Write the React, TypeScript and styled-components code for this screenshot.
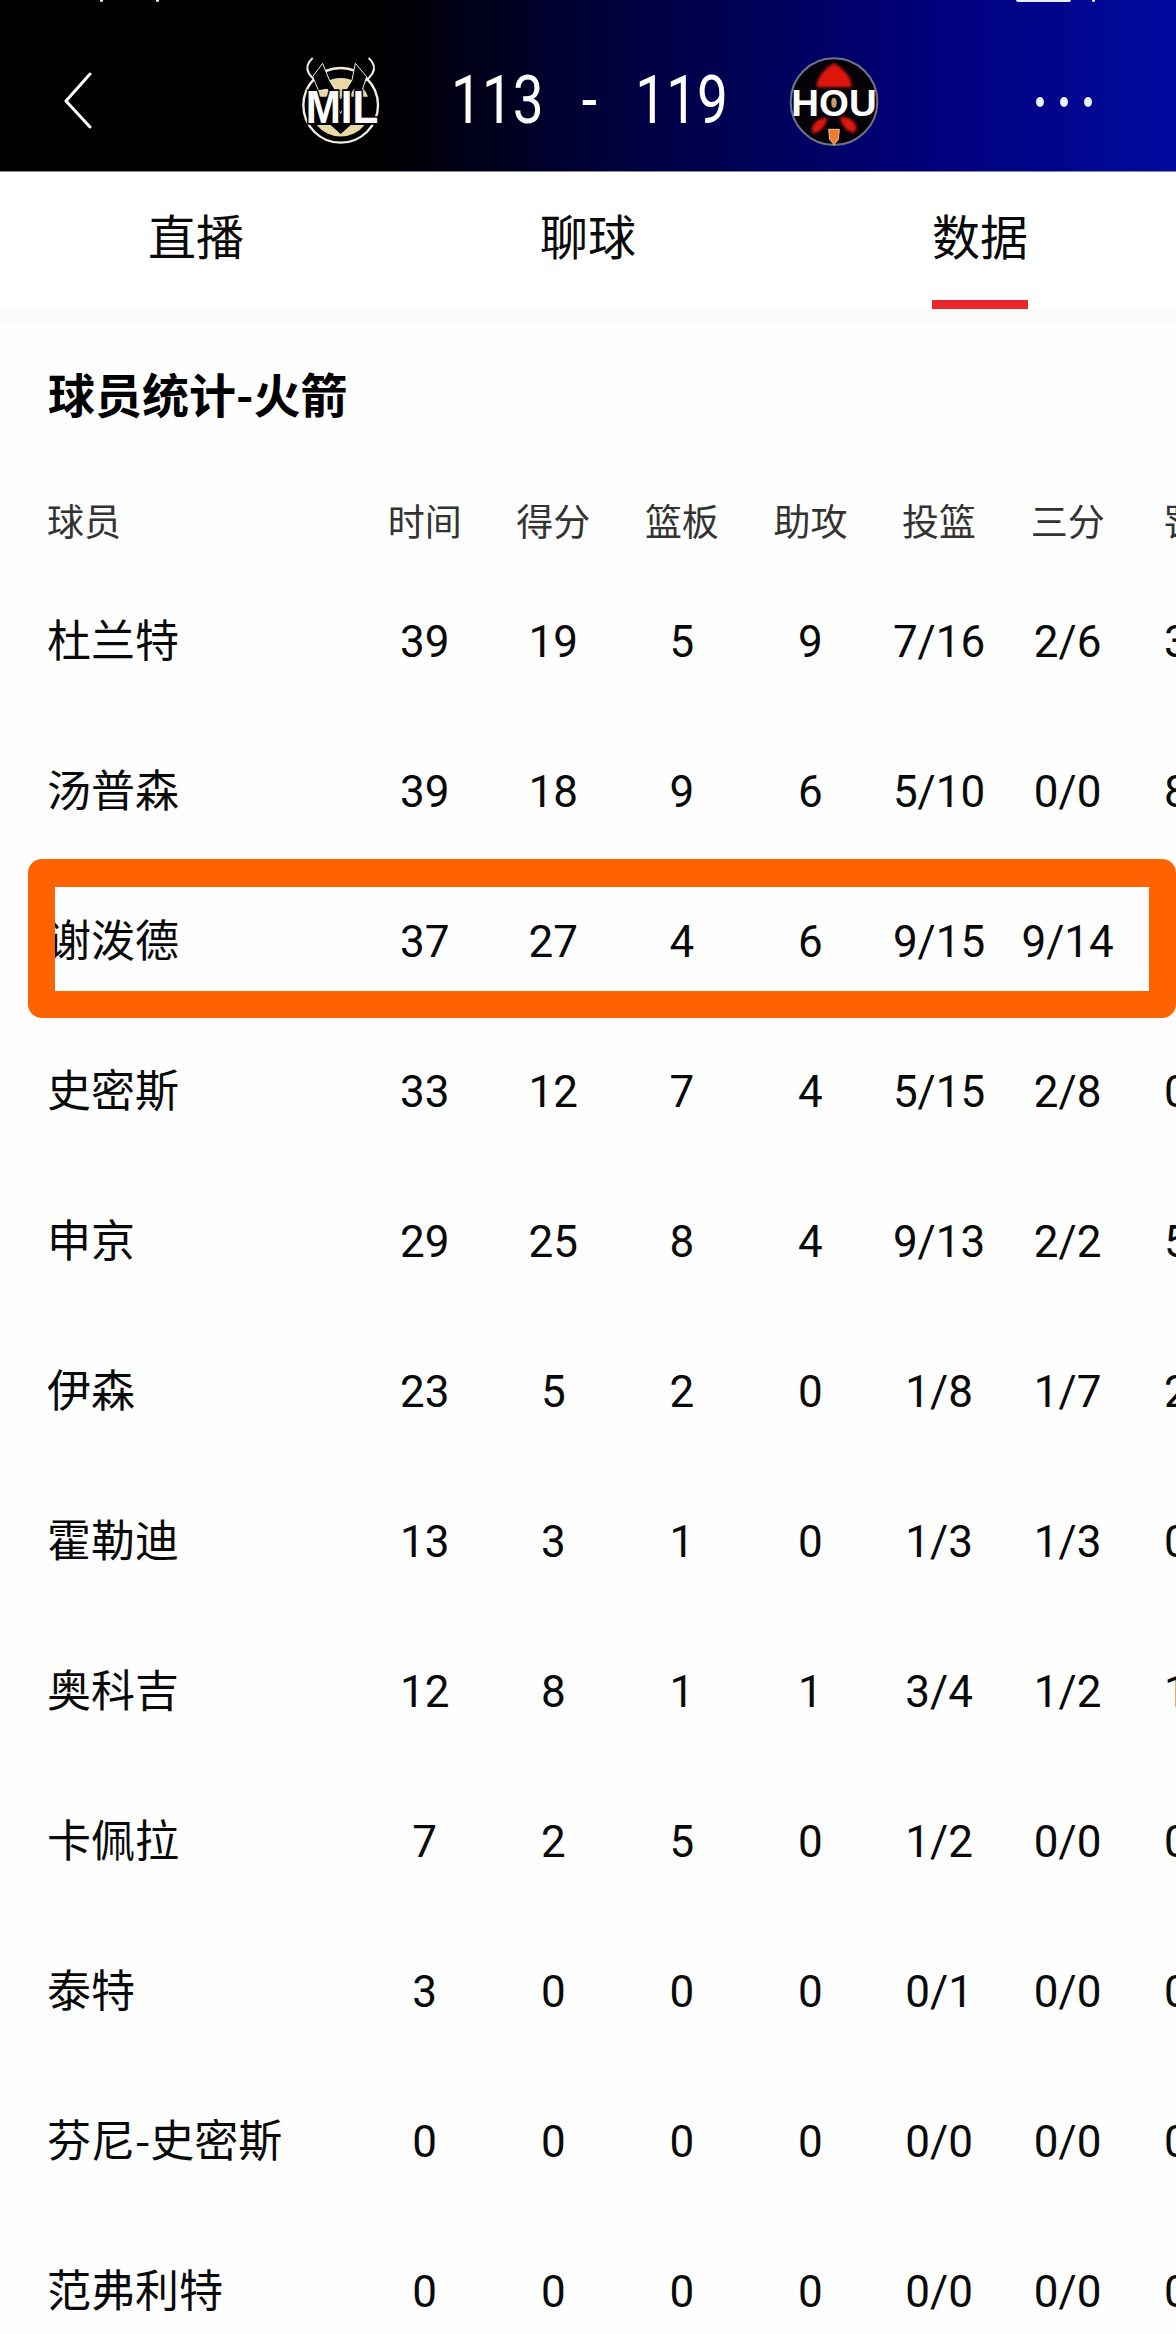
import React from 'react';
import styled, { createGlobalStyle } from 'styled-components';

const FONT = `Roboto, "Noto Sans CJK SC", sans-serif`;
const CJK_FONT = `"Noto Sans CJK SC", sans-serif`;

const GlobalStyle = createGlobalStyle`
  html, body {
    margin: 0;
    padding: 0;
    width: 1176px;
    height: 2334px;
    overflow: hidden;
    background: #fefefe;
  }
`;

const Page = styled.div`
  width: 1176px;
  height: 2334px;
  overflow: hidden;
  font-family: ${FONT};
  color: #0a0a0a;
`;

const Header = styled.header`
  position: relative;
  height: 172px;
  box-sizing: border-box;
  padding-top: 30px;
  display: grid;
  grid-template-columns: 270px 180px 310px 180px 1fr;
  grid-template-rows: 130px;
  align-items: center;
  background: linear-gradient(90deg, #000 0%, #000 32%, #00003c 52%, #000078 78%, #000a9e 100%);
  border-bottom: 1px solid #8a8a94;
`;

const StatusMark = styled.span<{ $left: number; $width: number }>`
  position: absolute;
  top: 0;
  left: ${(p) => p.$left}px;
  width: ${(p) => p.$width}px;
  height: 2px;
  border-radius: 0 0 3px 3px;
  background: #e8eeff;
`;

const BackCell = styled.div`
  padding: 10px 0 0 63px;
  display: flex;
  align-items: center;
`;

const Score = styled.div`
  margin: 10px 0 0 1px;
  font-family: Roboto, sans-serif;
  font-weight: 400;
  font-size: 67px;
  line-height: 1;
  color: #fff;
  white-space: nowrap;
  word-spacing: 30px;
  transform: scaleX(0.82);
  transform-origin: left center;
`;

const Dots = styled.div`
  margin: 14px 0 0 96px;
  display: flex;
  gap: 16px;
`;

const Dot = styled.i`
  width: 8px;
  height: 10px;
  border-radius: 50%;
  background: #e6f0ff;
`;

const Tabs = styled.nav`
  height: 137px;
  display: grid;
  grid-template-columns: repeat(3, 1fr);
  background: #fff;
`;

const Tab = styled.div`
  display: flex;
  justify-content: center;
`;

const TabLabel = styled.div<{ $active?: boolean }>`
  box-sizing: border-box;
  height: 137px;
  width: 96px;
  padding-top: 37px;
  font-size: 48px;
  line-height: 60px;
  white-space: nowrap;
  border-bottom: 9px solid ${(p) => (p.$active ? '#e8262c' : 'transparent')};
`;

const Divider = styled.div`
  height: 13px;
  background: #fafafa;
`;

const SectionTitle = styled.h2`
  margin: 41px 0 0;
  padding-left: 48px;
  font-family: ${CJK_FONT};
  font-size: 47px;
  line-height: 60px;
  font-weight: 700;
  color: #000;
`;

const Table = styled.section`
  margin-top: 70px;
`;

const Row = styled.div<{ $highlight?: boolean }>`
  position: relative;
  display: grid;
  grid-template-columns: 311.4px repeat(7, 128.6px);
  align-items: center;
  padding-left: 49px;
  height: 150px;
  font-size: 44px;

  ${(p) =>
    p.$highlight &&
    `
    &::after {
      content: '';
      position: absolute;
      top: -7px;
      left: 28px;
      width: 1148px;
      height: 159px;
      box-sizing: border-box;
      border: solid #ff6200;
      border-width: 28px 27px 27px 27px;
      border-radius: 14px;
    }
  `}
`;

const HeadRow = styled(Row)`
  height: 60px;
  margin-bottom: 13px;
  font-size: 37px;
  color: #333;
`;

const Name = styled.div`
  margin-left: -2px;
  padding-bottom: 6px;
  font-family: ${CJK_FONT};
  white-space: nowrap;
`;

const Cell = styled.div`
  padding-top: 2px;
  text-align: center;
  white-space: nowrap;
`;

const HeadCell = styled.div`
  padding-bottom: 6px;
  text-align: center;
  white-space: nowrap;
`;

const CutCell = styled.div`
  padding: 2px 0 0 32px;
  white-space: nowrap;
`;

const HeadCutCell = styled.div`
  padding: 0 0 6px 31px;
  white-space: nowrap;
`;

const BackIcon = () => (
  <svg width="29" height="57" viewBox="0 0 29 57" fill="none">
    <path d="M27 2 L3 29 L27 55" stroke="#fff" strokeWidth="3" strokeLinecap="round" strokeLinejoin="round" />
  </svg>
);

const MilLogo = () => (
  <svg width="180" height="130" viewBox="0 0 540 390">
    <circle cx="212" cy="226" r="112" fill="#000" stroke="#f3eedd" strokeWidth="7" />
    <path d="M130 200 A88 88 0 0 1 294 200 Z" fill="#e8d8a6" />
    <path d="M140 285 A92 92 0 0 0 284 285 Z" fill="#e8d8a6" />
    <path d="M128 84 C96 112 112 150 182 172 L212 208 L242 172 C312 150 328 112 296 84" fill="none" stroke="#f4f1e6" strokeWidth="6" />
    <path d="M128 140 L158 100 L178 150 L212 206 L246 150 L256 100 L290 140 L276 182 L252 178 L212 250 L172 178 L146 182 Z" fill="#000" stroke="#f4f1e6" strokeWidth="3" />
    <path d="M176 280 L212 312 L248 280 Z" fill="#000" />
    <text
      x="216"
      y="279"
      textAnchor="middle"
      fontFamily="Liberation Sans, sans-serif"
      fontWeight="700"
      fontSize="138"
      textLength="218"
      lengthAdjust="spacingAndGlyphs"
      fill="#fff"
      stroke="#000"
      strokeWidth="10"
      paintOrder="stroke"
    >
      MIL
    </text>
  </svg>
);

const HouLogo = () => (
  <svg width="180" height="130" viewBox="0 0 540 390">
    <defs>
      <filter id="soft" x="-20%" y="-20%" width="140%" height="140%">
        <feGaussianBlur stdDeviation="4" />
      </filter>
    </defs>
    <circle cx="222" cy="215" r="130" fill="#050308" stroke="#6f7488" strokeWidth="6" />
    <g fill="#e01410" filter="url(#soft)">
      <path d="M222 100 C250 115 278 145 274 172 L170 172 C168 145 194 115 222 100 Z" />
      <path d="M155 300 C160 275 180 262 202 264 C200 285 180 310 158 310 Z" />
      <path d="M290 295 C285 272 262 258 240 262 C244 285 262 308 282 308 Z" />
    </g>
    <path d="M206 298 L238 298 L235 328 L222 344 L209 328 Z" fill="#f07a30" stroke="#f8c090" strokeWidth="3" />
    <text
      x="222"
      y="257"
      textAnchor="middle"
      fontFamily="Liberation Sans, sans-serif"
      fontWeight="700"
      fontSize="112"
      textLength="256"
      lengthAdjust="spacingAndGlyphs"
      fill="#fff"
    >
      HOU
    </text>
    <ellipse cx="222" cy="218" rx="8" ry="15" fill="#c89a70" />
  </svg>
);

const columns = ['时间', '得分', '篮板', '助攻', '投篮', '三分'];

const players = [
  { name: '杜兰特', stats: ['39', '19', '5', '9', '7/16', '2/6'], ft: '3' },
  { name: '汤普森', stats: ['39', '18', '9', '6', '5/10', '0/0'], ft: '8' },
  { name: '谢泼德', stats: ['37', '27', '4', '6', '9/15', '9/14'], ft: '', highlight: true },
  { name: '史密斯', stats: ['33', '12', '7', '4', '5/15', '2/8'], ft: '0' },
  { name: '申京', stats: ['29', '25', '8', '4', '9/13', '2/2'], ft: '5' },
  { name: '伊森', stats: ['23', '5', '2', '0', '1/8', '1/7'], ft: '2' },
  { name: '霍勒迪', stats: ['13', '3', '1', '0', '1/3', '1/3'], ft: '0' },
  { name: '奥科吉', stats: ['12', '8', '1', '1', '3/4', '1/2'], ft: '1' },
  { name: '卡佩拉', stats: ['7', '2', '5', '0', '1/2', '0/0'], ft: '0' },
  { name: '泰特', stats: ['3', '0', '0', '0', '0/1', '0/0'], ft: '0' },
  { name: '芬尼-史密斯', stats: ['0', '0', '0', '0', '0/0', '0/0'], ft: '0' },
  { name: '范弗利特', stats: ['0', '0', '0', '0', '0/0', '0/0'], ft: '0' },
];

const App = () => {
  return (
    <Page>
      <GlobalStyle />
      <Header>
        <StatusMark $left={100} $width={3} />
        <StatusMark $left={156} $width={3} />
        <StatusMark $left={1016} $width={55} />
        <StatusMark $left={1092} $width={3} />
        <BackCell>
          <BackIcon />
        </BackCell>
        <MilLogo />
        <Score>113 - 119</Score>
        <HouLogo />
        <Dots>
          <Dot />
          <Dot />
          <Dot />
        </Dots>
      </Header>
      <Tabs>
        <Tab>
          <TabLabel>直播</TabLabel>
        </Tab>
        <Tab>
          <TabLabel>聊球</TabLabel>
        </Tab>
        <Tab>
          <TabLabel $active>数据</TabLabel>
        </Tab>
      </Tabs>
      <Divider />
      <SectionTitle>球员统计-火箭</SectionTitle>
      <Table>
        <HeadRow>
          <Name>球员</Name>
          {columns.map((c) => (
            <HeadCell key={c}>{c}</HeadCell>
          ))}
          <HeadCutCell>罚球</HeadCutCell>
        </HeadRow>
        {players.map((p) => (
          <Row key={p.name} $highlight={p.highlight}>
            <Name>{p.name}</Name>
            {p.stats.map((s, i) => (
              <Cell key={i}>{s}</Cell>
            ))}
            <CutCell>{p.ft}</CutCell>
          </Row>
        ))}
      </Table>
    </Page>
  );
};

export default App;
